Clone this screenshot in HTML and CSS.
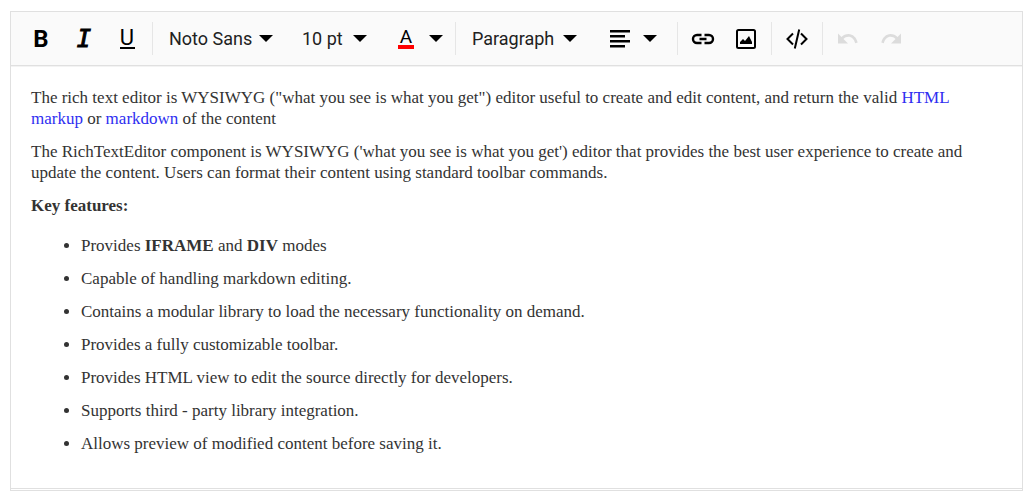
FILE: index.html
```html
<!DOCTYPE html>
<html lang="en">
<head>
<meta charset="utf-8">
<title>Rich Text Editor</title>
<link rel="stylesheet" href="styles.css">
</head>
<body>
<svg class="defs" aria-hidden="true"><symbol id="caret" viewBox="0 0 14 7"><path d="M0 0h14L7 7z"/></symbol></svg>
<main class="editor">
  <div class="toolbar" role="toolbar" aria-label="Formatting">
    <div class="group">
      <button class="tool bold" type="button" aria-label="Bold">B</button>
      <button class="tool italic" type="button" aria-label="Italic">I</button>
      <button class="tool underline" type="button" aria-label="Underline"><span class="underline-mark">U</span></button>
    </div>
    <div class="group">
      <label class="field font-name"><select aria-label="Font name"><option>Noto Sans</option></select><svg class="caret"><use href="#caret"/></svg></label>
      <label class="field font-size"><select aria-label="Font size"><option>10 pt</option></select><svg class="caret"><use href="#caret"/></svg></label>
      <button class="drop color" type="button" aria-label="Font color"><span class="color-mark">A</span><svg class="caret"><use href="#caret"/></svg></button>
    </div>
    <div class="group">
      <label class="field format"><select aria-label="Format"><option>Paragraph</option></select><svg class="caret"><use href="#caret"/></svg></label>
      <button class="drop align" type="button" aria-label="Alignment">
        <svg width="20" height="18" viewBox="0 0 20 18"><path d="M0 0h20v2.600H0zM0 5h15v2.600H0zM0 10h20v2.600H0zM0 15h15v2.600H0z"/></svg>
        <svg class="caret"><use href="#caret"/></svg>
      </button>
    </div>
    <div class="group">
      <button class="tool" type="button" aria-label="Insert link"><svg width="24" height="12" viewBox="0 0 24 12"><path class="line link" d="M10.500 2H6a4 4 0 0 0 0 8h4.500M13.500 2H18a4 4 0 0 1 0 8h-4.500M8.500 6h7"/></svg></button>
      <button class="tool" type="button" aria-label="Insert image"><svg width="20" height="20" viewBox="0 0 20 20"><rect class="line" x="1" y="1" width="18" height="18" rx="1.500"/><path d="M4 15v-2l3-3 2 2 4-5 3 6v2z"/></svg></button>
    </div>
    <div class="group">
      <button class="tool" type="button" aria-label="Code view"><svg width="22" height="20" viewBox="0 0 22 20"><path class="line" d="M7 4.500L1.500 10 7 15.500M15 4.500l5.500 5.500-5.500 5.500M13.200 .5L8.800 19.500"/></svg></button>
    </div>
    <div class="group">
      <button class="tool" type="button" aria-label="Undo" disabled><svg width="20" height="11" viewBox="0 0 20 11"><path d="M0 .5l3.500 3.500C5.300 2.200 7.600 1 10.500 1c4.300 0 8 3.500 9.200 8.500l-2.500.8C16.300 6.200 13.500 3.700 10.500 3.700c-2 0-3.700.8-5 2.300L10 10.500H0z"/></svg></button>
      <button class="tool" type="button" aria-label="Redo" disabled><svg width="20" height="11" viewBox="0 0 20 11"><path d="M20 .5l-3.500 3.500C14.700 2.200 12.400 1 9.500 1 5.200 1 1.500 4.500.3 9.500l2.500.8C3.700 6.200 6.500 3.700 9.500 3.700c2 0 3.700.8 5 2.300L10 10.500H20z"/></svg></button>
    </div>
  </div>
  <article class="content">
    <p>The rich text editor is WYSIWYG ("what you see is what you get") editor useful to create and edit content, and return the valid <a href="#">HTML markup</a> or <a href="#">markdown</a> of the content</p>
    <p>The RichTextEditor component is WYSIWYG ('what you see is what you get') editor that provides the best user experience to create and update the content. Users can format their content using standard toolbar commands.</p>
    <p><b>Key features:</b></p>
    <ul>
      <li>Provides <b>IFRAME</b> and <b>DIV</b> modes</li>
      <li>Capable of handling markdown editing.</li>
      <li>Contains a modular library to load the necessary functionality on demand.</li>
      <li>Provides a fully customizable toolbar.</li>
      <li>Provides HTML view to edit the source directly for developers.</li>
      <li>Supports third - party library integration.</li>
      <li>Allows preview of modified content before saving it.</li>
    </ul>
  </article>
</main>
</body>
</html>
```
FILE: styles.css
```css
* { box-sizing: border-box; }
body { margin: 11px 11px 11px 10px; background: #fff; }
.defs { display: none; }
.editor {
  border: 1px solid #e0e0e0;
  padding-bottom: 1px;
  font-family: "Liberation Serif", "Times New Roman", serif;
  color: #333;
}
.toolbar {
  display: flex;
  align-items: center;
  height: 54px;
  padding-left: 9px;
  background: #fafafa;
  border-bottom: 1px solid #e0e0e0;
  box-shadow: 0 1px 0 #f3f3f3;
  font-family: Roboto, sans-serif;
}
.group { display: flex; align-items: center; gap: 1px; height: 33px; }
.group + .group { margin-left: 4px; padding-left: 4px; border-left: 1px solid #e6e6e6; }
button, select {
  height: 33px;
  margin: 0;
  padding: 0;
  border: 0;
  background: none;
  color: #000;
  font-family: Roboto, sans-serif;
}
button { display: flex; align-items: center; fill: #000; }
.tool { justify-content: center; width: 42px; }
.tool:disabled { fill: #dcdcdc; }
.bold { font-size: 24px; font-weight: 700; }
.italic { font-family: "DejaVu Sans Mono", monospace; font-size: 24px; font-style: italic; -webkit-text-stroke: 1px #000; }
.underline { font-size: 22px; }
.underline-mark { width: 15px; height: 20px; line-height: 17px; border-bottom: 2px solid #000; }
.line { fill: none; stroke: #000; stroke-width: 2; }
.link { stroke-width: 2.4; }
.caret { width: 14px; height: 7px; fill: #000; }
.field { display: grid; align-items: center; }
.field select, .field .caret { grid-area: 1 / 1; }
.field select { appearance: none; width: 100%; padding-left: 12px; font-size: 18px; color: #212121; }
.field .caret { justify-self: end; margin-right: 16px; pointer-events: none; }
.font-name { width: 132px; }
.font-size { width: 93px; }
.format { width: 133px; }
.color { gap: 15px; padding: 0 8px 0 14px; }
.color-mark { width: 16px; height: 20px; line-height: 16px; font-size: 19px; border-bottom: 4px solid #f00; }
.align { gap: 13px; padding: 0 16px; }
.content {
  padding: 21px 20px 34px;
  border-bottom: 1px solid #e0e0e0;
  font-size: 17px;
  line-height: 21px;
}
.content p { margin: 0 0 12px; }
.content ul { margin: 19px 0 0; padding-left: 50px; }
.content li + li { margin-top: 12px; }
.content a { color: #2e2ef1; text-decoration: none; }
```
